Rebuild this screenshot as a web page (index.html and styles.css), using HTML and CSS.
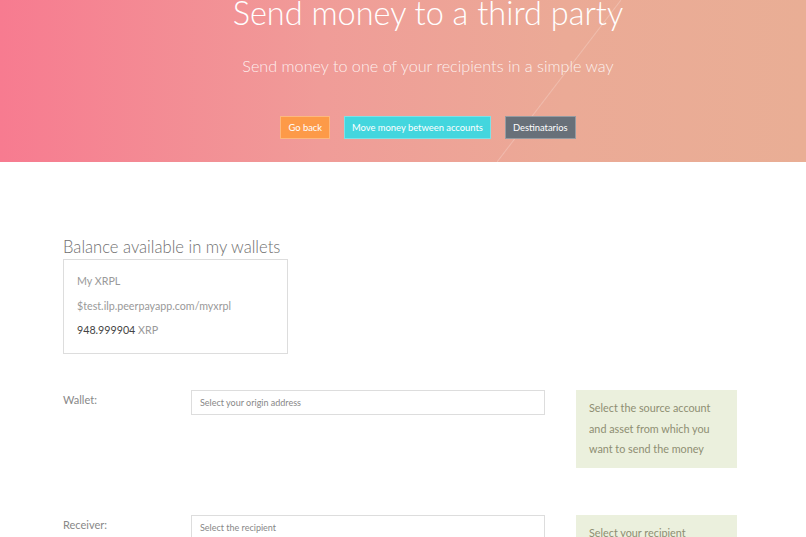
FILE: index.html
```html
<!DOCTYPE html>
<html>
<head>
<meta charset="utf-8">
<link rel="stylesheet" href="styles.css">
</head>
<body>
<header class="hero">
  <div class="hero-line"></div>
  <div class="hero-inner">
    <h1 class="hero-title">Send money to a third party</h1>
    <p class="hero-sub">Send money to one of your recipients in a simple way</p>
    <div class="hero-actions">
      <a class="btn btn-orange">Go back</a>
      <a class="btn btn-cyan">Move money between accounts</a>
      <a class="btn btn-gray">Destinatarios</a>
    </div>
  </div>
</header>
<main class="container">
  <h2 class="section-title">Balance available in my wallets</h2>
  <div class="wallet-card">
    <div class="wallet-name">My XRPL</div>
    <div class="wallet-addr">$test.ilp.peerpayapp.com/myxrpl</div>
    <div class="wallet-bal"><strong>948.999904</strong> XRP</div>
  </div>
  <div class="form-row first">
    <label class="form-label">Wallet:</label>
    <div class="form-input">Select your origin address</div>
    <div class="help">Select the source account and asset from which you want to send the money</div>
  </div>
  <div class="form-row">
    <label class="form-label">Receiver:</label>
    <div class="form-input">Select the recipient</div>
    <div class="help">Select your recipient</div>
  </div>
</main>
</body>
</html>
```
FILE: styles.css
```css
* { box-sizing: border-box; }
html, body { margin: 0; padding: 0; }
body {
  font-family: "Lato", "Open Sans", sans-serif;
  background: #fff;
  color: #777;
  overflow: hidden;
}
.hero {
  position: relative;
  height: 162px;
  background: linear-gradient(90deg, #f77b90 0%, #f09c98 40%, #ebaa96 70%, #e9ae95 100%);
  overflow: hidden;
  padding-top: 1px;
}
.hero-line {
  position: absolute;
  left: 497px;
  top: 0;
  width: 124px;
  height: 162px;
  background: linear-gradient(to bottom right, transparent 49.5%, rgba(255,255,255,0.22) 50%, transparent 50.5%);
}
.hero-inner {
  position: relative;
  text-align: center;
  padding-left: 50px;
}
.hero-title {
  margin: -10px 0 0;
  font-weight: 300;
  font-size: 32.5px;
  line-height: 44px;
  color: #fff;
}
.hero-sub {
  margin: 19px 0 0;
  font-weight: 300;
  font-size: 16.2px;
  line-height: 24px;
  color: rgba(255,255,255,0.85);
}
.hero-actions {
  display: flex;
  justify-content: center;
  gap: 14px;
  margin-top: 38px;
}
.btn {
  display: inline-block;
  height: 23px;
  line-height: 21px;
  padding: 0 7px;
  font-size: 9.4px;
  color: #fff;
  border: 1px solid rgba(255,255,255,0.3);
}
.btn-orange { background: #fd9a48; }
.btn-cyan { background: #43d6de; }
.btn-gray { background: #687079; }
.container {
  width: 680px;
  margin: 0 auto;
  padding-top: 74px;
}
.section-title {
  margin: 0;
  font-weight: 300;
  font-size: 16.6px;
  line-height: 22px;
  color: #6f6f6f;
}
.wallet-card {
  margin-top: 1px;
  width: 225px;
  height: 95px;
  border: 1px solid #ddd;
  padding: 14px 13px 0;
  font-size: 10.7px;
  color: #999;
}
.wallet-card div { line-height: 14px; margin-bottom: 10.5px; }
.wallet-bal strong { color: #444; font-weight: 400; }
.form-row {
  display: flex;
  align-items: flex-start;
  margin-top: 47px;
}
.form-row.first { margin-top: 36px; }
.form-label {
  width: 128px;
  flex: none;
  font-size: 11px;
  color: #888;
  padding-top: 3px;
}
.form-input {
  width: 354px;
  flex: none;
  height: 25px;
  border: 1px solid #ddd;
  padding: 0 8px;
  line-height: 23px;
  font-size: 9px;
  color: #888;
}
.help {
  width: 161px;
  flex: none;
  margin-left: 31px;
  background: #ebf0dd;
  color: #8e8e72;
  font-size: 10.8px;
  line-height: 20.5px;
  padding: 8px 13px 8px;
  min-height: 77px;
}
```
